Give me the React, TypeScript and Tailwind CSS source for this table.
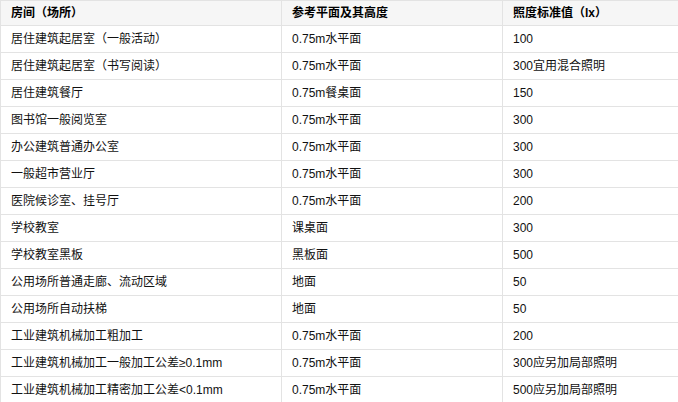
import React from 'react';

interface Row {
  room: string;
  plane: string;
  lux: string;
}

const rows: Row[] = [
  { room: '居住建筑起居室（一般活动）', plane: '0.75m水平面', lux: '100' },
  { room: '居住建筑起居室（书写阅读）', plane: '0.75m水平面', lux: '300宜用混合照明' },
  { room: '居住建筑餐厅', plane: '0.75m餐桌面', lux: '150' },
  { room: '图书馆一般阅览室', plane: '0.75m水平面', lux: '300' },
  { room: '办公建筑普通办公室', plane: '0.75m水平面', lux: '300' },
  { room: '一般超市营业厅', plane: '0.75m水平面', lux: '300' },
  { room: '医院候诊室、挂号厅', plane: '0.75m水平面', lux: '200' },
  { room: '学校教室', plane: '课桌面', lux: '300' },
  { room: '学校教室黑板', plane: '黑板面', lux: '500' },
  { room: '公用场所普通走廊、流动区域', plane: '地面', lux: '50' },
  { room: '公用场所自动扶梯', plane: '地面', lux: '50' },
  { room: '工业建筑机械加工粗加工', plane: '0.75m水平面', lux: '200' },
  { room: '工业建筑机械加工一般加工公差≥0.1mm', plane: '0.75m水平面', lux: '300应另加局部照明' },
  { room: '工业建筑机械加工精密加工公差<0.1mm', plane: '0.75m水平面', lux: '500应另加局部照明' },
];

const cell = 'border border-[#e3e3e3] px-[10px] text-left align-middle';

export default function App() {
  return (
    <div
      className="w-[678px] h-[402px] overflow-hidden bg-white text-[12px] text-[#111]"
      style={{ fontFamily: '"Liberation Sans", "Noto Sans CJK SC", sans-serif' }}
    >
      <table className="w-[700px] border-collapse table-fixed">
        <colgroup>
          <col className="w-[281px]" />
          <col className="w-[221px]" />
          <col />
        </colgroup>
        <thead>
          <tr className="h-[25px] bg-[#f6f6f6]">
            <th className={`${cell} font-bold text-black`}>房间（场所）</th>
            <th className={`${cell} font-bold text-black`}>参考平面及其高度</th>
            <th className={`${cell} font-bold text-black`}>照度标准值（lx）</th>
          </tr>
        </thead>
        <tbody>
          {rows.map((r) => (
            <tr key={r.room} className="h-[27px]">
              <td className={cell}>{r.room}</td>
              <td className={cell}>{r.plane}</td>
              <td className={cell}>{r.lux}</td>
            </tr>
          ))}
        </tbody>
      </table>
    </div>
  );
}
